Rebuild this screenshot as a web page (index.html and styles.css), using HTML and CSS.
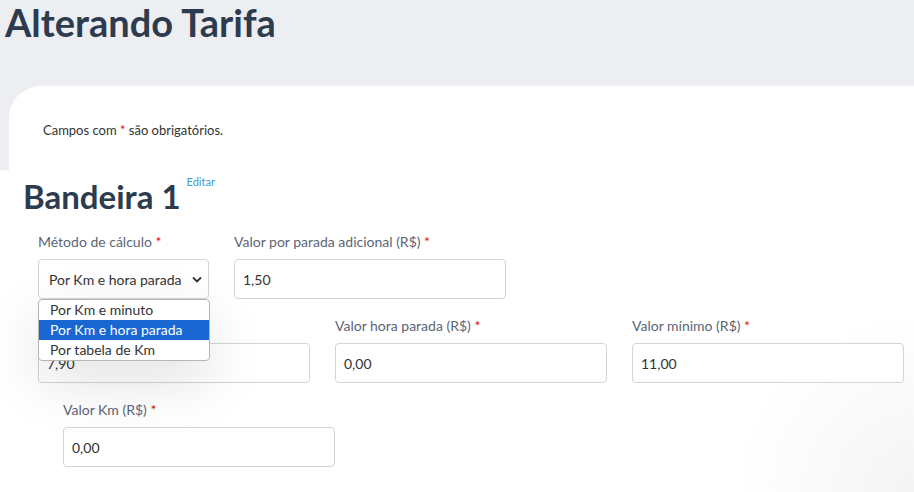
FILE: index.html
```html
<!DOCTYPE html>
<html lang="pt-BR">

<head>
    <meta charset="UTF-8">
    <meta name="viewport" content="width=device-width, initial-scale=1.0">
    <title>Alterando Tarifa</title>
    <link rel="stylesheet" href="styles.css">
</head>

<body>

    <h1 class="page-title">Alterando Tarifa</h1>

    <div class="card">
        <p class="note">Campos com <span class="req">*</span> são obrigatórios.</p>

        <h2 class="section-title">Bandeira 1 <a href="#" class="edit-link">Editar</a></h2>

        <div class="row">
            <div class="field field-select">
                <label>Método de cálculo <span class="req">*</span></label>
                <div class="select-wrap">
                    <select class="input select">
                        <option>Por Km e minuto</option>
                        <option selected>Por Km e hora parada</option>
                        <option>Por tabela de Km</option>
                    </select>
                    <ul class="dropdown">
                        <li>Por Km e minuto</li>
                        <li class="active">Por Km e hora parada</li>
                        <li>Por tabela de Km</li>
                    </ul>
                </div>
            </div>
            <div class="field">
                <label>Valor por parada adicional (R$) <span class="req">*</span></label>
                <input type="text" class="input" value="1,50">
            </div>
        </div>

        <div class="row">
            <div class="field">
                <label>Valor bandeirada (R$) <span class="req">*</span></label>
                <input type="text" class="input" value="7,90">
            </div>
            <div class="field">
                <label>Valor hora parada (R$) <span class="req">*</span></label>
                <input type="text" class="input" value="0,00">
            </div>
            <div class="field">
                <label>Valor mínimo (R$) <span class="req">*</span></label>
                <input type="text" class="input" value="11,00">
            </div>
        </div>

        <div class="row row-indent">
            <div class="field">
                <label>Valor Km (R$) <span class="req">*</span></label>
                <input type="text" class="input" value="0,00">
            </div>
        </div>
    </div>

</body>

</html>
```

FILE: styles.css
```css
body {
    font-family: Lato, "Open Sans", sans-serif;
    margin: 0;
    background: linear-gradient(#eceef1 0, #eceef1 170px, #fff 170px);
    height: 100vh;
    overflow: hidden;
    color: #333;
}

.page-title {
    margin: 0;
    padding: 0 5px;
    font-size: 38px;
    line-height: 44px;
    font-weight: 700;
    color: #2d3b4f;
}

.card {
    box-sizing: border-box;
    margin: 42px 0 0 9px;
    height: 406px;
    padding: 34px 0 0 14px;
    background-color: #fff;
    border-top-left-radius: 32px;
    background-image: radial-gradient(circle at 100% 100%, #f4f4f5 0, #fff 180px);
}

.note {
    margin: 0 0 0 20px;
    font-size: 13px;
    line-height: 20px;
}

.req {
    color: #e3101b;
}

.section-title {
    margin: 38px 0 0;
    font-size: 33px;
    line-height: 36px;
    font-weight: 700;
    color: #2d3b4f;
}

.edit-link {
    position: relative;
    top: -14px;
    margin-left: -2px;
    font-size: 11px;
    font-weight: 400;
    color: #3a9ad9;
    text-decoration: none;
    vertical-align: top;
}

.row {
    display: flex;
    gap: 25px;
    padding-left: 15px;
    margin-top: 18px;
}

.row + .row {
    margin-top: 17px;
}

.row-indent {
    padding-left: 40px;
}

.field {
    display: flex;
    flex-direction: column;
    width: 272px;
}

.field-select {
    width: 171px;
}

.field label {
    font-size: 14px;
    line-height: 20px;
    color: #5c6577;
    margin-bottom: 7px;
}

.input {
    box-sizing: border-box;
    height: 40px;
    padding: 0 8px;
    font-family: inherit;
    font-size: 14px;
    color: #333;
    background-color: #fff;
    border: 1px solid #d4d4d4;
    border-radius: 4px;
    outline: none;
}

.select-wrap {
    position: relative;
}

.select {
    width: 100%;
    padding-left: 10px;
    appearance: none;
    background-image: url("data:image/svg+xml;utf8,<svg xmlns='http://www.w3.org/2000/svg' width='10' height='7' viewBox='0 0 10 7'><path d='M1 1.5l4 4 4-4' fill='none' stroke='%23333' stroke-width='1.8'/></svg>");
    background-repeat: no-repeat;
    background-position: right 6px center;
}

.dropdown {
    position: absolute;
    top: 40px;
    left: 0;
    width: 170px;
    margin: 0;
    padding: 0;
    list-style: none;
    background: #fff;
    border: 1px solid #b6b6b6;
    border-radius: 4px;
    box-shadow: 0 20px 60px rgba(0, 0, 0, 0.12);
    overflow: hidden;
    z-index: 2;
}

.dropdown li {
    height: 20px;
    padding-left: 11px;
    font-size: 14px;
    line-height: 20px;
    color: #333;
}

.dropdown li.active {
    background-color: #1967d2;
    color: #fff;
}
```
